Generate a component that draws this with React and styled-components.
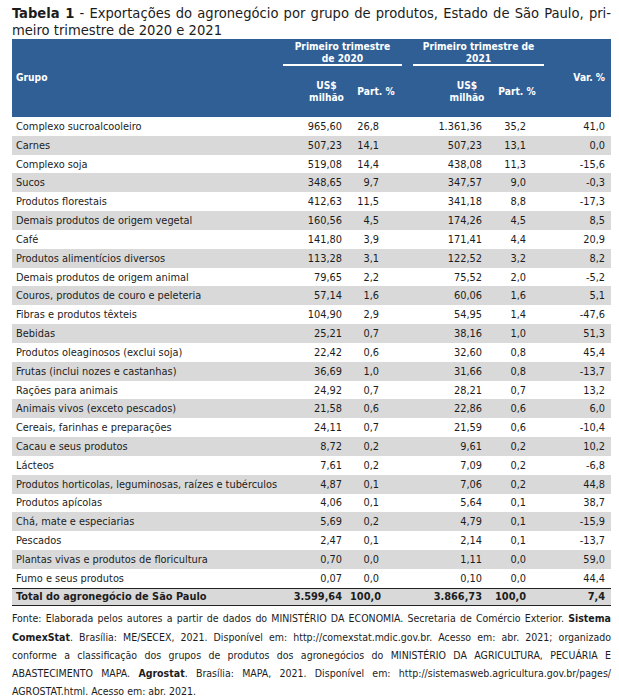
import React from "react"
import styled, { createGlobalStyle } from "styled-components"

const rows = [
  ["Complexo sucroalcooleiro", "965,60", "26,8", "1.361,36", "35,2", "41,0"],
  ["Carnes", "507,23", "14,1", "507,23", "13,1", "0,0"],
  ["Complexo soja", "519,08", "14,4", "438,08", "11,3", "-15,6"],
  ["Sucos", "348,65", "9,7", "347,57", "9,0", "-0,3"],
  ["Produtos florestais", "412,63", "11,5", "341,18", "8,8", "-17,3"],
  ["Demais produtos de origem vegetal", "160,56", "4,5", "174,26", "4,5", "8,5"],
  ["Café", "141,80", "3,9", "171,41", "4,4", "20,9"],
  ["Produtos alimentícios diversos", "113,28", "3,1", "122,52", "3,2", "8,2"],
  ["Demais produtos de origem animal", "79,65", "2,2", "75,52", "2,0", "-5,2"],
  ["Couros, produtos de couro e peleteria", "57,14", "1,6", "60,06", "1,6", "5,1"],
  ["Fibras e produtos têxteis", "104,90", "2,9", "54,95", "1,4", "-47,6"],
  ["Bebidas", "25,21", "0,7", "38,16", "1,0", "51,3"],
  ["Produtos oleaginosos (exclui soja)", "22,42", "0,6", "32,60", "0,8", "45,4"],
  ["Frutas (inclui nozes e castanhas)", "36,69", "1,0", "31,66", "0,8", "-13,7"],
  ["Rações para animais", "24,92", "0,7", "28,21", "0,7", "13,2"],
  ["Animais vivos (exceto pescados)", "21,58", "0,6", "22,86", "0,6", "6,0"],
  ["Cereais, farinhas e preparações", "24,11", "0,7", "21,59", "0,6", "-10,4"],
  ["Cacau e seus produtos", "8,72", "0,2", "9,61", "0,2", "10,2"],
  ["Lácteos", "7,61", "0,2", "7,09", "0,2", "-6,8"],
  ["Produtos horticolas, leguminosas, raízes e tubérculos", "4,87", "0,1", "7,06", "0,2", "44,8"],
  ["Produtos apícolas", "4,06", "0,1", "5,64", "0,1", "38,7"],
  ["Chá, mate e especiarias", "5,69", "0,2", "4,79", "0,1", "-15,9"],
  ["Pescados", "2,47", "0,1", "2,14", "0,1", "-13,7"],
  ["Plantas vivas e produtos de floricultura", "0,70", "0,0", "1,11", "0,0", "59,0"],
  ["Fumo e seus produtos", "0,07", "0,0", "0,10", "0,0", "44,4"],
]

const total = ["Total do agronegócio de São Paulo", "3.599,64", "100,0", "3.866,73", "100,0", "7,4"]

// right padding of each figure column, so the numbers line up as in print
const pads = [8, 23, 8, 18, 6]
const cols = [2, 3, 5, 6, 7]

const Figures = ({ values }) =>
  values.map((value, j) => (
    <Num key={j} $pad={pads[j]} $col={cols[j]}>
      {value}
    </Num>
  ))

const App = () => (
  <Page>
    <GlobalStyle />
    <Title>
      <TitleLine $justify>
        <b>Tabela 1</b> - Exportações do agronegócio por grupo de produtos, Estado de São Paulo, pri-
      </TitleLine>
      <TitleLine>meiro trimestre de 2020 e 2021</TitleLine>
    </Title>

    <Head>
      <GroupHead>Grupo</GroupHead>
      <PeriodHead $col={2}>
        Primeiro trimestre
        <br />
        de 2020
      </PeriodHead>
      <PeriodHead $col={5}>
        Primeiro trimestre de
        <br />
        2021
      </PeriodHead>
      <VarHead>Var. %</VarHead>
      <SubHead $col={2} $padLeft={20}>
        US$
        <br />
        milhão
      </SubHead>
      <SubHead $col={3}>Part. %</SubHead>
      <SubHead $col={5} $padLeft={31}>
        US$
        <br />
        milhão
      </SubHead>
      <SubHead $col={6}>Part. %</SubHead>
    </Head>

    {rows.map((row, i) => (
      <Row key={row[0]} $shaded={i % 2 === 1}>
        <Label>{row[0]}</Label>
        <Figures values={row.slice(1)} />
      </Row>
    ))}

    <TotalRow $shaded>
      <Label>{total[0]}</Label>
      <Figures values={total.slice(1)} />
    </TotalRow>

    <Source>
      <SourceLine $justify>
        Fonte: Elaborada pelos autores a partir de dados do MINISTÉRIO DA ECONOMIA. Secretaria de Comércio Exterior. <b>Sistema</b>
      </SourceLine>
      <SourceLine $justify>
        <b>ComexStat</b>. Brasília: ME/SECEX, 2021. Disponível em: http://comexstat.mdic.gov.br. Acesso em: abr. 2021; organizado
      </SourceLine>
      <SourceLine $justify>
        conforme a classificação dos grupos de produtos dos agronegócios do MINISTÉRIO DA AGRICULTURA, PECUÁRIA E
      </SourceLine>
      <SourceLine $justify>
        ABASTECIMENTO MAPA. <b>Agrostat</b>. Brasília: MAPA, 2021. Disponível em: http://sistemasweb.agricultura.gov.br/pages/
      </SourceLine>
      <SourceLine>AGROSTAT.html. Acesso em: abr. 2021.</SourceLine>
    </Source>
  </Page>
)

const GlobalStyle = createGlobalStyle`
  body {
    margin: 0;
    background: #fff;
  }
`

const COLUMNS = "271px 67px 52px 11px 77px 54px 67px"

const Page = styled.div`
  width: 599px;
  padding: 4px 8px 0 12px;
  font-family: "DejaVu Sans Condensed", "DejaVu Sans", sans-serif;
  color: #1c1c1c;
`

const Title = styled.div`
  font-size: 14.6px;
  line-height: 17px;
  margin-bottom: 1px;
`

const TitleLine = styled.div`
  text-align: ${(p) => (p.$justify ? "justify" : "left")};
  text-align-last: ${(p) => (p.$justify ? "justify" : "left")};
  white-space: nowrap;
`

const Head = styled.div`
  display: grid;
  grid-template-columns: ${COLUMNS};
  grid-template-rows: 28px 50px;
  background: #305f96;
  color: #fff;
  font-weight: bold;
  font-size: 10.2px;
  line-height: 12px;
`

const GroupHead = styled.div`
  grid-column: 1;
  grid-row: 1 / 3;
  align-self: center;
  padding-left: 4px;
`

const PeriodHead = styled.div`
  grid-column: ${(p) => p.$col} / span 2;
  grid-row: 1;
  padding-top: 2px;
  text-align: center;
  border-bottom: 2px solid #fff;
  margin-bottom: 1px;
`

const VarHead = styled.div`
  grid-column: 7;
  grid-row: 1 / 3;
  align-self: center;
  text-align: right;
  padding-right: 6px;
`

const SubHead = styled.div`
  grid-column: ${(p) => p.$col};
  grid-row: 2;
  align-self: center;
  text-align: center;
  padding-left: ${(p) => p.$padLeft || 0}px;
`

const Row = styled.div`
  display: grid;
  grid-template-columns: ${COLUMNS};
  height: 18.83px;
  align-items: center;
  background: ${(p) => (p.$shaded ? "#d9d9d9" : "#fff")};
  font-size: 10.9px;
`

const TotalRow = styled(Row)`
  box-sizing: border-box;
  height: 18.5px;
  border-top: 1px solid #222;
  border-bottom: 1px solid #222;
  font-weight: bold;
`

const Label = styled.div`
  grid-column: 1;
  padding-left: 4px;
  white-space: nowrap;
`

const Num = styled.div`
  grid-column: ${(p) => p.$col};
  text-align: right;
  padding-right: ${(p) => p.$pad}px;
`

const Source = styled.div`
  padding-top: 3px;
  font-size: 10.5px;
  line-height: 18.3px;
`

const SourceLine = styled.div`
  text-align: ${(p) => (p.$justify ? "justify" : "left")};
  text-align-last: ${(p) => (p.$justify ? "justify" : "left")};
  white-space: nowrap;
`

export default App
